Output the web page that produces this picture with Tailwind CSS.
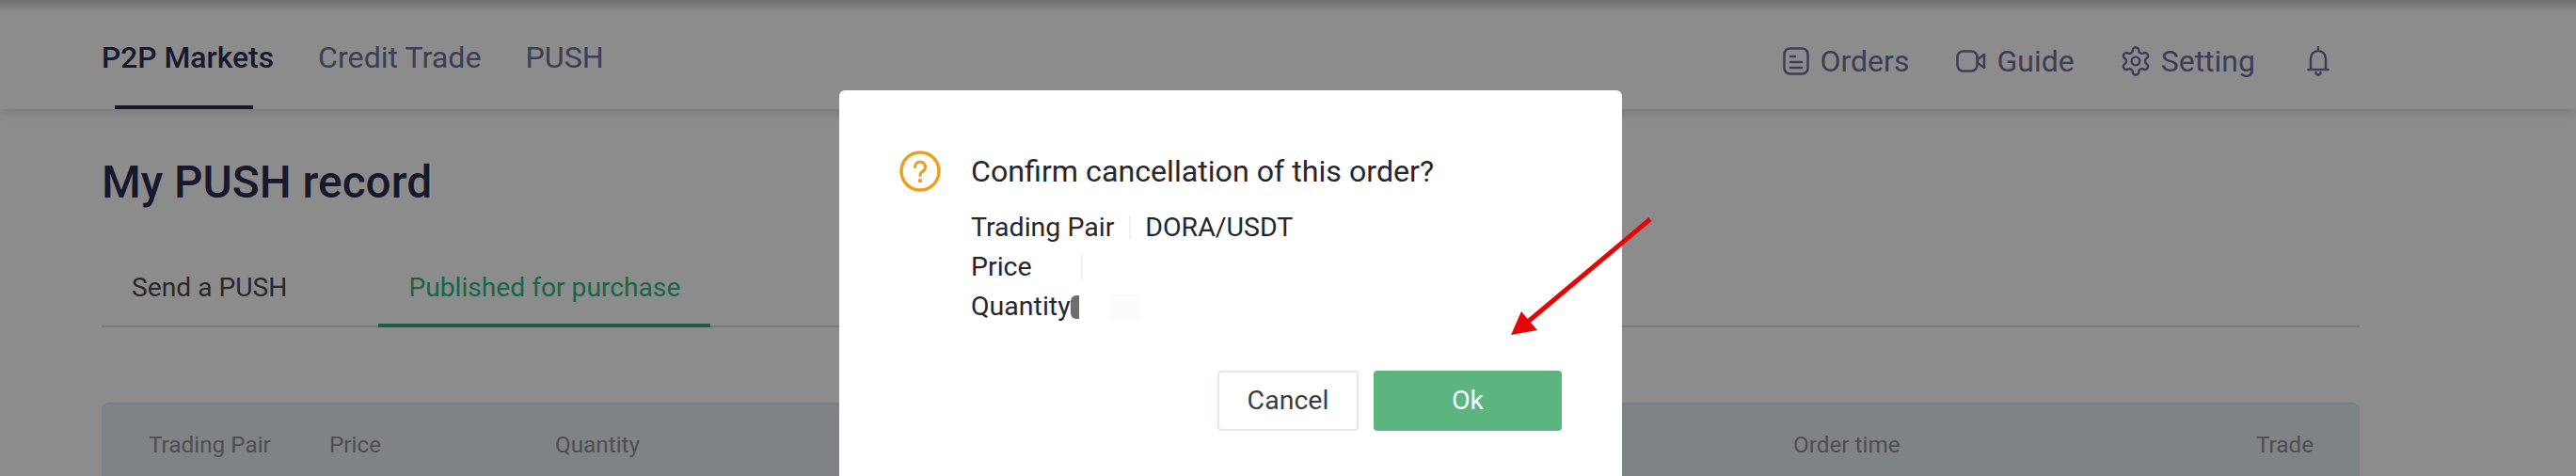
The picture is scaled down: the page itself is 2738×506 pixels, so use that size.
<!DOCTYPE html>
<html lang="en">
<head>
    <meta charset="UTF-8">
    <meta name="viewport" content="width=device-width, initial-scale=1.0">
    <title>My PUSH record</title>
    <script src="https://cdn.jsdelivr.net/npm/@tailwindcss/browser@4"></script>
</head>
<body class="bg-white overflow-hidden font-['Roboto',sans-serif]">
<div class="relative w-[2738px] h-[506px] overflow-hidden">

    <!-- page under the overlay -->
    <header class="h-[116px] flex justify-between shadow-[0_4px_10px_rgba(0,0,0,0.12)] bg-white pl-[108px] pr-[262px]">
        <nav class="flex gap-[47px] text-[32.2px] leading-[36px] text-[#7070a0]">
            <a class="relative pt-[43px] text-[31.8px] text-[#2c2c52] font-medium">P2P Markets
                <span class="absolute left-[14px] right-[22px] top-[112px] h-[4px] bg-[#2c2c52]"></span>
            </a>
            <a class="pt-[43px]">Credit Trade</a>
            <a class="pt-[43px]">PUSH</a>
        </nav>
        <div class="flex items-center gap-[50px] text-[32px] text-[#7070a0] pt-[14px]">
            <a class="flex items-center gap-[12px]">
                <svg class="w-[28px] h-[30px]" viewBox="0 0 28 30" fill="none" stroke="currentColor" stroke-width="2.5" stroke-linecap="round"><rect x="1.5" y="1.5" width="25" height="27" rx="6"/><path d="M8 10h5M8 16h12M8 22h12"/></svg>
                Orders
            </a>
            <a class="flex items-center gap-[11px]">
                <svg class="w-[32px] h-[24px]" viewBox="0 0 32 24" fill="none" stroke="currentColor" stroke-width="2.5" stroke-linejoin="round"><rect x="1.5" y="1.5" width="21" height="21" rx="6"/><path d="M23 10l7-5v14l-7-5z"/></svg>
                Guide
            </a>
            <a class="flex items-center gap-[12px]">
                <svg class="w-[30px] h-[32px]" viewBox="2 1 20 22" fill="none" stroke="currentColor" stroke-width="1.7" stroke-linecap="round" stroke-linejoin="round"><path d="M12.22 2h-.44a2 2 0 0 0-2 2v.18a2 2 0 0 1-1 1.73l-.43.25a2 2 0 0 1-2 0l-.15-.08a2 2 0 0 0-2.73.73l-.22.38a2 2 0 0 0 .73 2.73l.15.1a2 2 0 0 1 1 1.72v.51a2 2 0 0 1-1 1.74l-.15.09a2 2 0 0 0-.73 2.73l.22.38a2 2 0 0 0 2.73.73l.15-.08a2 2 0 0 1 2 0l.43.25a2 2 0 0 1 1 1.73V20a2 2 0 0 0 2 2h.44a2 2 0 0 0 2-2v-.18a2 2 0 0 1 1-1.73l.43-.25a2 2 0 0 1 2 0l.15.08a2 2 0 0 0 2.73-.73l.22-.39a2 2 0 0 0-.73-2.73l-.15-.08a2 2 0 0 1-1-1.74v-.5a2 2 0 0 1 1-1.74l.15-.09a2 2 0 0 0 .73-2.73l-.22-.38a2 2 0 0 0-2.73-.73l-.15.08a2 2 0 0 1-2 0l-.43-.25a2 2 0 0 1-1-1.73V4a2 2 0 0 0-2-2z"/><circle cx="12" cy="12" r="3"/></svg>
                Setting
            </a>
            <svg class="w-[24px] h-[32px] ml-[5px]" viewBox="0 0 24 32" fill="none" stroke="currentColor" stroke-width="2.5" stroke-linecap="round" stroke-linejoin="round"><path d="M12 1v3M1.5 25h21M4 25V13a8 8 0 0 1 16 0v12M9.5 28a2.5 2.5 0 0 0 5 0"/></svg>
        </div>
    </header>

    <main class="px-[108px] w-[2508px] box-content">
        <h1 class="text-[47.8px] leading-[54px] font-medium text-[#2c2c52] pt-[51px]">My PUSH record</h1>

        <div class="flex mt-[45px] h-[82px] border-b-2 border-[#dcdce6] text-[28.2px] leading-[32px] w-[2400px]">
            <a class="px-[32px] pt-[24px] text-[#4a4a55]">Send a PUSH</a>
            <a class="ml-[65px] px-[32px] pt-[24px] h-[82px] border-b-4 border-[#2eaa78] text-[#30b884]">Published for purchase</a>
        </div>

        <div class="mt-[80px] h-[120px] w-[2400px] bg-[#e8eff2] border-t-2 border-[#dfe6ea] rounded-t-lg flex text-[24.3px] leading-[28px] text-[#8e8e98] pt-[29px] pl-[50px]">
            <span class="w-[192px]">Trading Pair</span>
            <span class="w-[240px]">Price</span>
            <span class="w-[1316px]">Quantity</span>
            <span class="w-[492px]">Order time</span>
            <span>Trade</span>
        </div>
    </main>

    <!-- overlay -->
    <div class="absolute inset-0 bg-black/45"></div>
    <div class="absolute inset-x-0 top-0 h-[14px] bg-gradient-to-b from-black/20 to-transparent"></div>

    <!-- confirm dialog -->
    <div class="absolute left-[892px] top-[96px] w-[832px] h-[440px] bg-white rounded-md pl-[64px] pr-[64px] pt-[64px]">
        <div class="flex items-center gap-[32px] h-[44px]">
            <svg class="w-[44px] h-[44px] shrink-0" viewBox="0 0 44 44" fill="none" stroke="#eda01f" stroke-width="3.5" stroke-linecap="round"><circle cx="22" cy="22" r="20"/><path d="M16.5 17.5a5.5 5.5 0 1 1 8.5 4.6c-2 1.3-3 2.4-3 4.4" stroke-width="3"/><circle cx="22" cy="32" r="1" stroke-width="2.4"/></svg>
            <h2 class="text-[32.2px] leading-[40px] text-[#26262b]">Confirm cancellation of this order?</h2>
        </div>
        <div class="pl-[76px] mt-[17px] text-[28.5px] leading-[42px] text-[#26262b]">
            <div class="flex items-center">
                <span>Trading Pair</span>
                <span class="w-[2px] h-[26px] ml-[16px] mr-[15px] bg-[#f0f0f2]"></span>
                <span>DORA/USDT</span>
            </div>
            <div class="flex items-center">
                <span>Price</span>
                <span class="w-[2px] h-[26px] ml-[52px] bg-[#f0f0f2]"></span>
            </div>
            <div class="flex items-center">
                <span>Quantity</span>
                <span class="w-[9px] h-[25px] bg-[#6d6d6d] rounded-l-md"></span>
                <span class="w-[32px] h-[27px] ml-[33px] bg-[#fcfcfc]"></span>
            </div>
        </div>
        <div class="flex justify-end gap-[16px] mt-[47px]">
            <button class="w-[150px] h-[64px] border-2 border-[#e4e6f1] rounded-[4px] bg-white text-[28.5px] text-[#3c3c42]">Cancel</button>
            <button class="w-[200px] h-[64px] rounded-[4px] bg-[#5cb57f] text-[28.5px] text-white">Ok</button>
        </div>
    </div>

    <!-- red annotation arrow -->
    <svg class="absolute left-[1590px] top-[220px]" width="180" height="150" viewBox="0 0 180 150" fill="none">
        <path d="M164 13L34 122" stroke="#e60505" stroke-width="5"/>
        <path d="M16 136L27 111L44 131Z" fill="#e60505"/>
    </svg>
</div>
</body>
</html>
